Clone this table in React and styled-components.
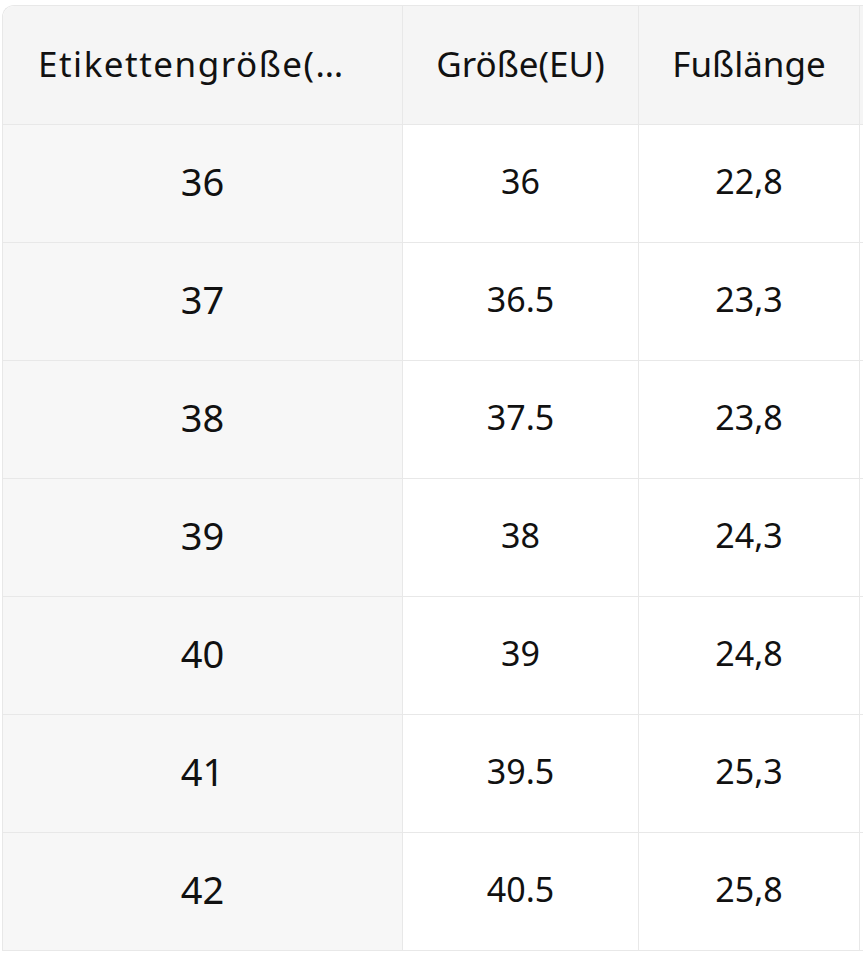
import styled, { createGlobalStyle } from 'styled-components'

const GlobalStyle = createGlobalStyle`
  html, body {
    margin: 0;
    padding: 0;
    background: #ffffff;
  }
  body {
    font-family: "Noto Sans", "Liberation Sans", sans-serif;
    color: #111111;
    overflow: hidden;
  }
`

const sizes = [
  ['36', '36', '22,8'],
  ['37', '36.5', '23,3'],
  ['38', '37.5', '23,8'],
  ['39', '38', '24,3'],
  ['40', '39', '24,8'],
  ['41', '39.5', '25,3'],
  ['42', '40.5', '25,8'],
]

const Frame = styled.div`
  width: 863px;
  height: 954px;
  overflow: hidden;
  padding: 5px 0 0 2px;
  box-sizing: border-box;
`

const Table = styled.table`
  table-layout: fixed;
  border-collapse: separate;
  border-spacing: 0;
  width: 1000px;
  border-top: 1px solid #e8e8e8;
  border-left: 1px solid #e8e8e8;
  border-top-left-radius: 12px;
  overflow: hidden;
`

const Head = styled.th`
  box-sizing: border-box;
  width: ${(p) => p.$w}px;
  height: 119px;
  padding: ${(p) => (p.$lead ? '0 44px 4px 35px' : '0 6px 4px')};
  background: #f5f5f5;
  border-right: 1px solid #e8e8e8;
  border-bottom: 1px solid #e8e8e8;
  font-size: 35px;
  font-weight: 400;
  letter-spacing: ${(p) => (p.$lead ? '1.5px' : '0')};
  text-align: ${(p) => (p.$lead ? 'left' : 'center')};
  white-space: nowrap;
  overflow: hidden;
  text-overflow: ellipsis;
  &:first-child {
    border-top-left-radius: 11px;
  }
`

const Cell = styled.td`
  box-sizing: border-box;
  height: 118px;
  padding: 0 0 5px;
  text-align: center;
  background: ${(p) => (p.$lead ? '#f7f7f7' : '#ffffff')};
  border-right: 1px solid #e8e8e8;
  border-bottom: 1px solid #e8e8e8;
  font-size: ${(p) => (p.$lead ? '38px' : '34px')};
  color: #111111;
`

export default function App() {
  return (
    <>
      <GlobalStyle />
      <Frame>
        <Table>
          <thead>
            <tr>
              <Head $w={400} $lead>Etikettengröße(CN)</Head>
              <Head $w={236}>Größe(EU)</Head>
              <Head $w={221}>Fußlänge</Head>
              <Head $w={143}></Head>
            </tr>
          </thead>
          <tbody>
            {sizes.map(([label, eu, foot]) => (
              <tr key={label}>
                <Cell $lead>{label}</Cell>
                <Cell>{eu}</Cell>
                <Cell>{foot}</Cell>
                <Cell></Cell>
              </tr>
            ))}
          </tbody>
        </Table>
      </Frame>
    </>
  )
}
